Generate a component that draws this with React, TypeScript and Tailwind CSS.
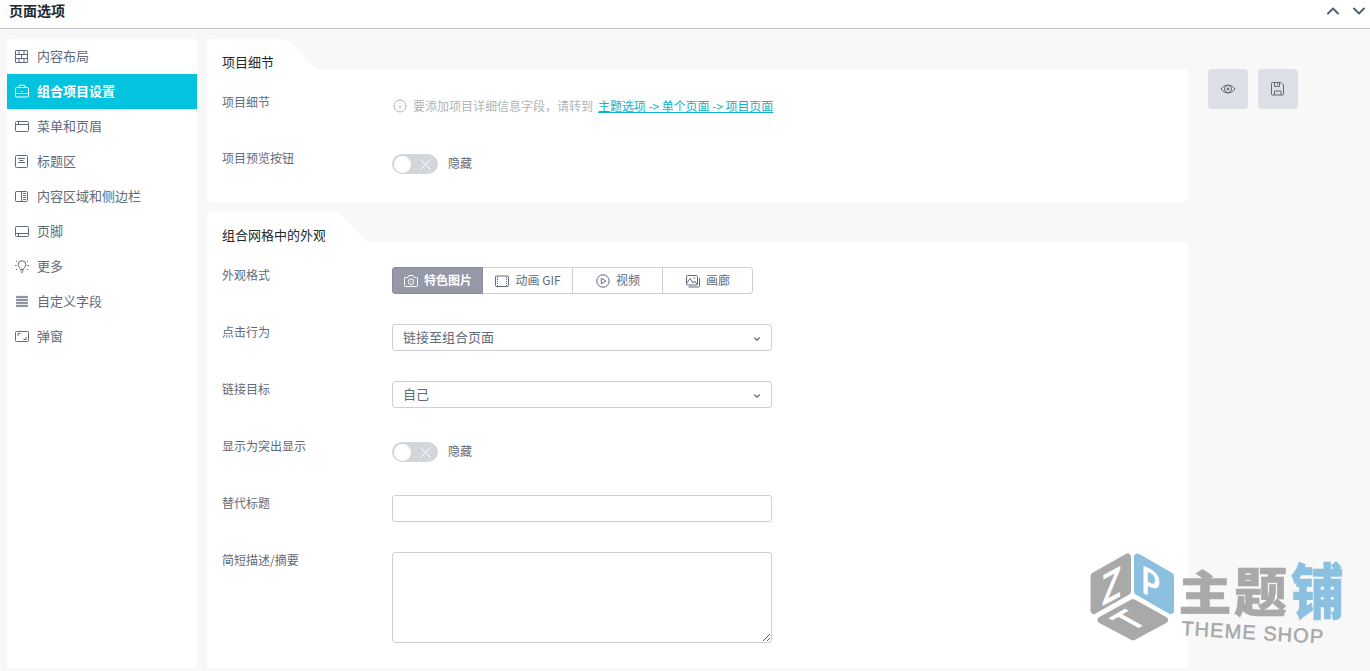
import React, { useState } from 'react';
import { ChevronDown, ChevronUp } from 'lucide-react';

const stroke = {
  width: 16,
  height: 16,
  viewBox: '0 0 16 16',
  fill: 'none',
  stroke: 'currentColor',
  strokeWidth: 1,
};

const icons = {
  layout: (
    <svg {...stroke}>
      <rect x="1.5" y="2.5" width="12" height="12" rx=".5" />
      <path d="M1.5 6.5h12M1.5 10.5h12M5 2.5v4M10 2.5v4M7.5 6.5v4M5 10.5v4M10 10.5v4" />
    </svg>
  ),
  briefcase: (
    <svg {...stroke}>
      <rect x="1.5" y="4.5" width="13" height="9.5" rx="1" />
      <path d="M5 4.5V3a.8.8 0 0 1 .8-.8h4.4a.8.8 0 0 1 .8.8v1.5M1.5 10.5h13M7.2 8.5h1.6" />
    </svg>
  ),
  header: (
    <svg {...stroke}>
      <rect x="1.5" y="3.5" width="13" height="10" rx="1" />
      <path d="M1.5 6.5h13M4.5 3.5v3" />
    </svg>
  ),
  title: (
    <svg {...stroke}>
      <rect x="1.5" y="2.5" width="12" height="12" rx="1" />
      <path d="M4 5.5h7M5.5 7.5h4M4 9.5h7" />
    </svg>
  ),
  sidebar: (
    <svg {...stroke}>
      <rect x="1.5" y="3.5" width="12" height="10" rx="1" />
      <path d="M7.5 3.5v10M9 5.5h3M9 7.5h3M9 9.5h3M9 11.5h3" />
    </svg>
  ),
  footer: (
    <svg {...stroke}>
      <rect x="1.5" y="3.5" width="13" height="10" rx="1" />
      <path d="M1.5 10.5h13M4.5 10.5v3" />
    </svg>
  ),
  bulb: (
    <svg {...stroke}>
      <path d="M6.5 11.5c0-1.8-2.3-2.5-2.3-5a3.8 3.8 0 0 1 7.6 0c0 2.5-2.3 3.2-2.3 5zM6.5 13h3M7.3 14.7h1.4M1 7.5h1.7M13.3 7.5H15M2 2.8l1.2.8M14 2.8l-1.2.8M2 11.8l1.2-.8M14 11.8l-1.2-.8" />
    </svg>
  ),
  fields: (
    <svg {...stroke} strokeWidth=".8">
      <path d="M2.5 3.4h11v1.2h-11zM2.5 6.4h11v1.2h-11zM2.5 9.4h11v1.2h-11zM2.5 12.4h11v1.2h-11z" />
    </svg>
  ),
  popup: (
    <svg {...stroke}>
      <rect x="1.5" y="3.5" width="13" height="10" rx="1" />
      <path d="M4 8V5.5h2.5M9.5 11.5H12V9" />
    </svg>
  ),
  camera: (
    <svg {...stroke}>
      <path d="M2.3 4.5h2.4L6 2.5h4l1.3 2h2.4a.8.8 0 0 1 .8.8v7.4a.8.8 0 0 1-.8.8H2.3a.8.8 0 0 1-.8-.8V5.3a.8.8 0 0 1 .8-.8z" />
      <circle cx="8" cy="8.7" r="2.8" />
      <circle cx="8" cy="8.7" r=".3" />
    </svg>
  ),
  film: (
    <svg {...stroke}>
      <rect x="1.5" y="3" width="13" height="10.5" rx="1" />
      <path d="M3.5 4v9M12.5 4v9" strokeDasharray="1 1" />
    </svg>
  ),
  play: (
    <svg {...stroke}>
      <circle cx="8" cy="8" r="6.2" />
      <path d="M6.3 5.2v5.6L10.8 8z" />
    </svg>
  ),
  gallery: (
    <svg {...stroke}>
      <rect x="1.5" y="2.5" width="11" height="9.5" rx="1" />
      <path d="M3.5 14h10a1 1 0 0 0 1-1V5M1.8 10l3.3-4.5 3 4.5 1.4-2 2.7 3.5" />
      <circle cx="9.3" cy="5" r=".4" />
    </svg>
  ),
  info: (
    <svg {...stroke}>
      <circle cx="8" cy="8" r="6" />
      <path d="M8 7v4.2M8 4.7v1.1" />
    </svg>
  ),
  eye: (
    <svg {...stroke}>
      <path d="M1 8c2-2.6 4.3-3.9 7-3.9S13 5.4 15 8c-2 2.6-4.3 3.9-7 3.9S3 10.6 1 8z" />
      <circle cx="8" cy="8" r="3.6" />
      <circle cx="8" cy="8" r="1" fill="currentColor" />
    </svg>
  ),
  save: (
    <svg {...stroke}>
      <path d="M2.5 1.5h8.5l2.5 2.5v9a1 1 0 0 1-1 1H2.5a1 1 0 0 1-1-1V2.5a1 1 0 0 1 1-1zM4.5 1.5v4h5v-4M7.5 2.5v1.5M4.5 14v-4h6.5v4" />
    </svg>
  ),
};

type IconName = keyof typeof icons;

const menu: { icon: IconName; label: string }[] = [
  { icon: 'layout', label: '内容布局' },
  { icon: 'briefcase', label: '组合项目设置' },
  { icon: 'header', label: '菜单和页眉' },
  { icon: 'title', label: '标题区' },
  { icon: 'sidebar', label: '内容区域和侧边栏' },
  { icon: 'footer', label: '页脚' },
  { icon: 'bulb', label: '更多' },
  { icon: 'fields', label: '自定义字段' },
  { icon: 'popup', label: '弹窗' },
];

const formats: { icon: IconName; label: string }[] = [
  { icon: 'camera', label: '特色图片' },
  { icon: 'film', label: '动画 GIF' },
  { icon: 'play', label: '视频' },
  { icon: 'gallery', label: '画廊' },
];

function Section({ title, children, className = '' }: { title: string; children: React.ReactNode; className?: string }) {
  return (
    <section className={`flex flex-col ${className}`}>
      <div className="flex h-[30px]">
        <h2 className="h-[30px] rounded-tl bg-white pl-[15px] text-[13px] leading-[45px] text-[#23282d]">{title}</h2>
        <svg className="-ml-px" width="44" height="30" viewBox="0 0 44 30">
          <path d="M0 0h10q4 0 7 3l26 27H0z" fill="#fff" />
        </svg>
      </div>
      <div className="flex-1 rounded-tr rounded-b bg-white px-[15px] pt-[25px]">{children}</div>
    </section>
  );
}

function Row({ label, children, className = 'h-[57px]' }: { label: string; children: React.ReactNode; className?: string }) {
  return (
    <div className={`flex items-start ${className}`}>
      <div className="w-[170px] text-xs leading-4 text-[#5f6b7a]">{label}</div>
      {children}
    </div>
  );
}

function Toggle() {
  const [on, setOn] = useState(false);
  return (
    <div className="mt-1 flex gap-2.5 text-xs text-[#5f6b7a]">
      <button
        className={`flex h-5 w-[46px] items-center justify-between rounded-full ${
          on ? 'flex-row-reverse bg-[#04c3de] pr-0.5 pl-[7px]' : 'bg-[#d2d5da] pr-[7px] pl-0.5'
        }`}
        onClick={() => setOn(!on)}
      >
        <span className="h-[17px] w-[17px] rounded-full bg-white" />
        <svg width="11" height="11" viewBox="0 0 11 11" stroke="#fff" strokeWidth="1">
          <path d="M.5.5l10 10M10.5.5l-10 10" />
        </svg>
      </button>
      <span className="leading-[18px]">{on ? '显示' : '隐藏'}</span>
    </div>
  );
}

function Select({ value }: { value: string }) {
  return (
    <button className="flex h-[27px] w-[380px] justify-between rounded-[3px] border border-[#ccd0d4] bg-white pr-[9px] pl-2.5 text-[13px] leading-[23px] text-[#5f6b7a]">
      <span>{value}</span>
      <ChevronDown size={10} strokeWidth={2.6} className="mt-[9px]" />
    </button>
  );
}

function Watermark() {
  return (
    <svg className="pointer-events-none absolute top-[545px] left-[1085px]" width="265" height="105" viewBox="0 0 265 105">
      <g strokeWidth="7" strokeLinejoin="round">
        <path d="M9 31L42.5 12V46.5L9 65.5z" fill="#a9a9a9" stroke="#a9a9a9" />
        <path d="M52.5 12L85.5 31V65.5L52.5 46.5z" fill="#8bc0e0" stroke="#8bc0e0" />
        <path d="M16 75L48 57.5L79.5 75L48 92z" fill="#a9a9a9" stroke="#a9a9a9" />
      </g>
      <g fill="#fff" fontFamily="Lato, sans-serif" fontWeight="700">
        <text transform="matrix(.75 -.4 0 1 17 61)" fontSize="42">Z</text>
        <text transform="matrix(.8 .4 0 1 56 47)" fontSize="38">P</text>
        <text transform="matrix(.95 -.56 1.1 .62 47 87)" fontSize="30">T</text>
      </g>
      <g fontFamily="'Noto Sans CJK SC', sans-serif" fontWeight="900" fontSize="53" strokeWidth=".6">
        <text transform="matrix(1 0 0 .88 93.5 65)" fill="#a9a9a9" stroke="#a9a9a9">主</text>
        <text transform="matrix(1 0 0 1 149 67)" fill="#a9a9a9" stroke="#a9a9a9">题</text>
        <text transform="matrix(1 0 0 1.13 206 69)" fill="#8bc0e0" stroke="#8bc0e0">铺</text>
      </g>
      <text transform="rotate(3.5 96 90)" x="96" y="90" fill="#a9a9a9" stroke="#a9a9a9" strokeWidth=".5" fontFamily="'Liberation Sans', sans-serif" fontSize="20" textLength="142">
        THEME SHOP
      </text>
    </svg>
  );
}

export default function App() {
  const [active, setActive] = useState(1);
  const [format, setFormat] = useState(0);

  return (
    <div className="relative flex h-[671px] w-[1370px] flex-col overflow-hidden bg-[#f8f8f8] font-['Noto_Sans_CJK_SC',sans-serif]">
      <header className="flex h-[29px] items-center justify-between border-b border-[#c3c4c7] bg-white pr-px pb-[7px] pl-[9px]">
        <h1 className="-mt-0.5 text-sm leading-5 font-bold text-[#23282d]">页面选项</h1>
        <div className="flex gap-1.5 text-[#50617a]">
          <ChevronUp size={20} strokeWidth={2.4} />
          <ChevronDown size={20} strokeWidth={2.4} />
        </div>
      </header>

      <div className="flex flex-1 pt-2.5 pb-[3px] pl-[7px]">
        <nav className="mr-2.5 w-[190px] rounded bg-white">
          {menu.map((item, i) => (
            <button
              key={item.label}
              onClick={() => setActive(i)}
              className={`flex h-[35px] w-full items-center gap-[7px] pb-px pl-[7px] text-[13px] leading-5 ${
                active === i ? 'bg-[#04c3de] font-bold text-white' : 'text-[#5f6b7a]'
              }`}
            >
              {icons[item.icon]}
              <span className="-mt-px">{item.label}</span>
            </button>
          ))}
        </nav>

        <main className="flex w-[981px] flex-col gap-2.5">
          <Section title="项目细节" className="h-[163px] shrink-0">
            <Row label="项目细节" className="h-14">
              <div className="mt-1 flex text-xs leading-4 text-[#b0b6b6]">
                {icons.info}
                <span className="ml-[5px]">要添加项目详细信息字段，请转到</span>
                <a className="ml-[5px] tracking-[-0.06px] text-[#12b0c9] underline">主题选项 -&gt; 单个页面 -&gt; 项目页面</a>
              </div>
            </Row>
            <Row label="项目预览按钮" className="h-12">
              <Toggle />
            </Row>
          </Section>

          <Section title="组合网格中的外观" className="flex-1">
            <Row label="外观格式">
              <div className="flex h-[27px]">
                {formats.map((item, i) => (
                  <button
                    key={item.label}
                    onClick={() => setFormat(i)}
                    className={`flex w-[91px] items-center justify-center gap-[5px] border text-xs not-first:-ml-px first:rounded-l-[3px] last:rounded-r-[3px] ${
                      format === i ? 'z-10 border-[#8a8c9d] bg-[#9698a8] font-bold text-white' : 'border-[#ccd0d4] text-[#5f6b7a]'
                    }`}
                  >
                    {icons[item.icon]}
                    <span className="-mt-0.5">{item.label}</span>
                  </button>
                ))}
              </div>
            </Row>
            <Row label="点击行为">
              <Select value="链接至组合页面" />
            </Row>
            <Row label="链接目标">
              <Select value="自己" />
            </Row>
            <Row label="显示为突出显示">
              <Toggle />
            </Row>
            <Row label="替代标题">
              <input className="h-[27px] w-[380px] rounded-[3px] border border-[#ccd0d4] px-2.5 text-[13px] outline-none" />
            </Row>
            <Row label="简短描述/摘要">
              <textarea className="h-[91px] w-[380px] rounded-[3px] border border-[#ccd0d4] px-2.5 text-[13px] outline-none" />
            </Row>
          </Section>
        </main>

        <div className="mt-[30px] ml-5 flex gap-2.5 text-[#5f6b7a]">
          <button className="flex h-10 w-10 items-center justify-center rounded-sm bg-[#dcdfe6]">{icons.eye}</button>
          <button className="flex h-10 w-10 items-center justify-center rounded-sm bg-[#dcdfe6]">{icons.save}</button>
        </div>
      </div>

      <Watermark />
    </div>
  );
}
